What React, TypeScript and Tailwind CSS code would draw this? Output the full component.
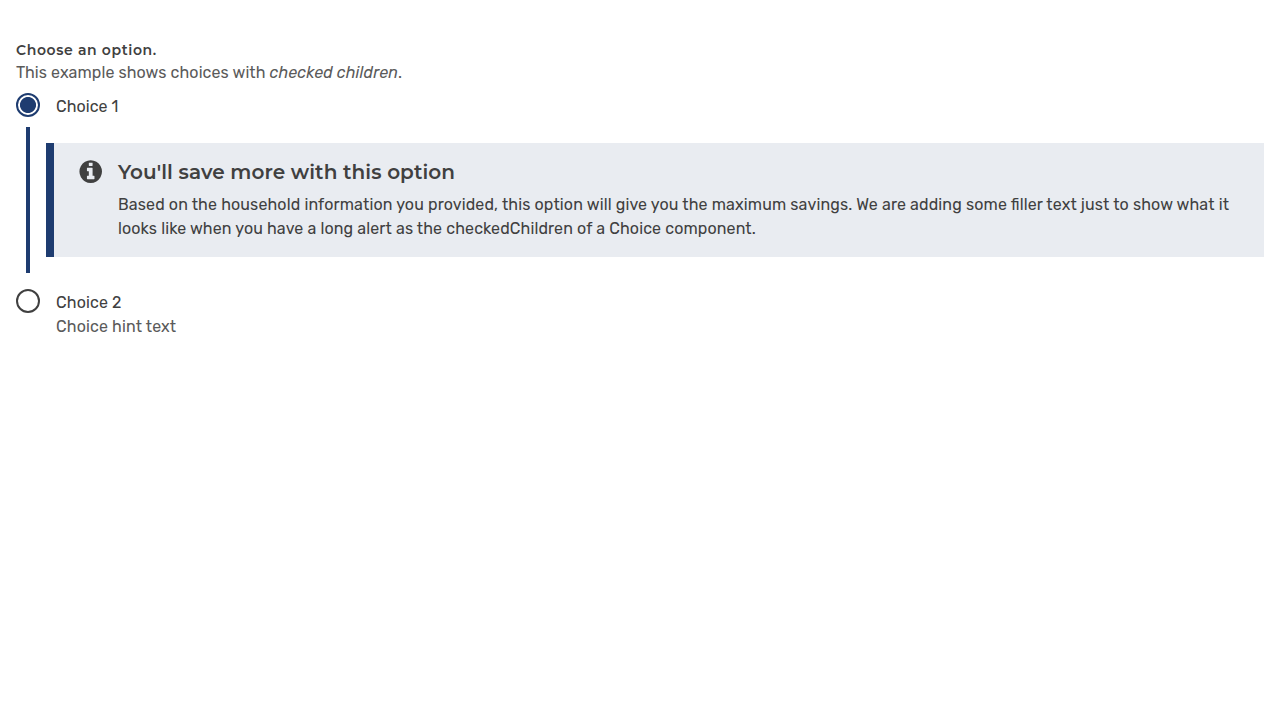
import React from "react";

const body = "font-[Rubik,Roboto,sans-serif]";
const heading = "font-[Montserrat,Inter,sans-serif]";

function InfoIcon() {
  return (
    <svg className="mt-px size-6 shrink-0" viewBox="100 106 1632 1632" fill="#404040" aria-hidden="true">
      <path d="M1152 1376v-160q0-14-9-23t-23-9h-96v-512q0-14-9-23t-23-9h-320q-14 0-23 9t-9 23v160q0 14 9 23t23 9h96v320h-96q-14 0-23 9t-9 23v160q0 14 9 23t23 9h448q14 0 23-9t9-23zm-128-896v-160q0-14-9-23t-23-9h-192q-14 0-23 9t-9 23v160q0 14 9 23t23 9h192q14 0 23-9t9-23zm640 416q0 209-103 385.5t-279.5 279.5-385.5 103-385.5-103-279.5-279.5-103-385.5 103-385.5 279.5-279.5 385.5-103 385.5 103 279.5 279.5 103 385.5z" />
    </svg>
  );
}

function Radio({ checked, onChange }: { checked: boolean; onChange: () => void }) {
  return (
    <input
      type="radio"
      name="choice"
      checked={checked}
      onChange={onChange}
      className="size-6 shrink-0 appearance-none rounded-full border-2 border-[#404040] bg-white checked:border-[#1e3c70] checked:bg-[radial-gradient(circle,#1e3c70_7.6px,#fff_8.4px)] checked:bg-origin-border"
    />
  );
}

export default function App() {
  const [choice, setChoice] = React.useState(1);
  return (
    <div
      role="radiogroup"
      aria-labelledby="choices-label"
      className={`${body} px-4 pt-10 text-base leading-6 tracking-[0.132px] text-[#404040] [font-feature-settings:'liga']`}
    >
      <div
        id="choices-label"
        className={`${heading} h-5 text-[14px] leading-5 font-semibold tracking-[0.63px]`}
      >
        Choose an option.
      </div>
      <p className="pt-px tracking-[0.09px] text-[#5a5a5a]">
        This example shows choices with <em>checked children</em>.
      </p>
      <label className="mt-2 flex gap-4">
        <Radio checked={choice === 1} onChange={() => setChoice(1)} />
        <span className="-mb-px pt-0.5 tracking-[0.05px]">Choice 1</span>
      </label>
      {choice === 1 && (
        <div className="mt-[9px] ml-[10px] border-l-4 border-[#1e3c70] py-4 pl-4">
          <div className="flex h-[114px] border-l-8 border-[#1e3c70] bg-[#e9ecf1] pt-4 pl-[25px]">
            <InfoIcon />
            <div className="ml-[15px]">
              <h2 className={`${heading} mb-2 h-[26px] text-[20px] leading-[26px] font-semibold tracking-[0.07px]`}>
                You'll save more with this option
              </h2>
              <p className="whitespace-nowrap">
                <span className="block">
                  Based on the household information you provided, this option will give you the maximum savings. We are adding some filler text just to show what it
                </span>
                <span className="block tracking-[0.12px]">
                  looks like when you have a long alert as the checkedChildren of a Choice component.
                </span>
              </p>
            </div>
          </div>
        </div>
      )}
      <label className="mt-4 flex gap-4">
        <Radio checked={choice === 2} onChange={() => setChoice(2)} />
        <span className="pt-0.5">
          <span className="block">Choice 2</span>
          <span className="block text-[#5a5a5a]">Choice hint text</span>
        </span>
      </label>
    </div>
  );
}
